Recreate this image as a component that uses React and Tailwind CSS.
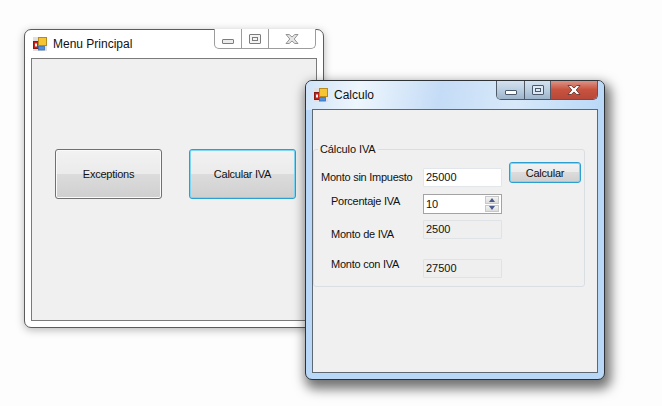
import React from "react";

const font = { fontFamily: '"Liberation Sans", Arial, sans-serif' };

function AppIcon() {
  return (
    <svg width="14" height="14" viewBox="0 0 14 14" className="shrink-0">
      <rect x="0" y="0" width="14" height="14" fill="#e0e0e0" />
      <rect x="0.5" y="4.5" width="5" height="7" fill="#c8201a" stroke="#8c1a14" />
      <rect x="2" y="6.5" width="2" height="3" fill="#f3f3f3" />
      <rect x="5.5" y="0.5" width="8" height="8" fill="#f5c533" stroke="#b88a1c" />
      <rect x="5.5" y="9.5" width="6" height="3.5" fill="#4f8fe0" stroke="#3a6db0" strokeWidth="0.8" />
    </svg>
  );
}

function MinGlyph({ glass }) {
  return (
    <div className={`w-[12px] h-[5px] rounded-[1px] border ${glass ? "border-[#4a5a6c] bg-white" : "border-[#7c7c7c] bg-[#ececec]"}`} />
  );
}

function MaxGlyph({ glass }) {
  return (
    <div className={`w-[12px] h-[10px] border rounded-[1px] flex items-center justify-center ${glass ? "border-[#4a5a6c] bg-[#dfe9f3]" : "border-[#7c7c7c] bg-[#f4f4f4]"}`}>
      <div className={`w-[6px] h-[4px] border ${glass ? "border-[#4a5a6c]" : "border-[#7c7c7c]"}`} />
    </div>
  );
}

function CloseGlyph({ glass }) {
  return (
    <svg width="14" height="10" viewBox="0 0 14 10">
      <path
        d="M1 0.5h3.2L7 3l2.8-2.5H13L9.2 5 13 9.5H9.8L7 7 4.2 9.5H1L4.8 5z"
        fill={glass ? "#ffffff" : "#e6e6e6"}
        stroke={glass ? "#5a2a24" : "#7c7c7c"}
        strokeWidth="0.8"
      />
    </svg>
  );
}

function CaptionButtons({ glass }) {
  if (glass) {
    return (
      <div className="ml-auto self-start flex h-[20px] w-[102px] -mt-px border border-t-0 border-[#4f5a66] rounded-b-[5px] overflow-hidden">
        <div className="w-[28px] flex items-center justify-center border-r border-[#4f5a66] bg-gradient-to-b from-[#d6e3f0] via-[#bccfe2] to-[#9db4ca]">
          <div className="mt-[5px]"><MinGlyph glass /></div>
        </div>
        <div className="w-[26px] flex items-center justify-center border-r border-[#4f5a66] bg-gradient-to-b from-[#d6e3f0] via-[#bccfe2] to-[#9db4ca]">
          <MaxGlyph glass />
        </div>
        <div className="flex-1 flex items-center justify-center bg-gradient-to-b from-[#dc9a8e] via-[#c8533f] to-[#b8483a]">
          <CloseGlyph glass />
        </div>
      </div>
    );
  }
  return (
    <div className="ml-auto mr-px self-start flex h-[20px] w-[102px] -mt-px border border-t-0 border-[#9c9c9c] rounded-b-[5px] bg-white">
      <div className="w-[27px] flex items-center justify-center border-r border-[#9c9c9c]">
        <div className="mt-[5px]"><MinGlyph /></div>
      </div>
      <div className="w-[27px] flex items-center justify-center border-r border-[#9c9c9c]">
        <MaxGlyph />
      </div>
      <div className="flex-1 flex items-center justify-center">
        <CloseGlyph />
      </div>
    </div>
  );
}

function WinButton({ children, focused, className = "", textClass = "" }) {
  return (
    <button
      className={`relative overflow-hidden rounded-[3px] border text-[11px] tracking-[-0.25px] text-[#111] flex items-center justify-center shrink-0 bg-[linear-gradient(to_bottom,#f2f2f2_0%,#ebebeb_49%,#dcdcdc_50%,#cfcfcf_100%)] ${
        focused ? "border-[#2a9fd0] shadow-[inset_0_0_0_1px_#7fd6f2]" : "border-[#707070] shadow-[inset_0_0_0_1px_#fafafa]"
      } ${className}`}
    >
      <span className={textClass}>{children}</span>
    </button>
  );
}

function TextValue({ children, disabled, className = "", textClass = "" }) {
  return (
    <div
      className={`w-[79px] h-[19px] border rounded-[1px] flex items-center pl-[2px] text-[11px] text-[#111] ${
        disabled ? "bg-[#efefef] border-[#dfe3e6]" : "bg-white border-[#e2e6ea]"
      } ${className}`}
    >
      <span className={textClass}>{children}</span>
    </div>
  );
}

function Spinner() {
  return (
    <div className="w-[79px] h-[20px] border border-[#a3a3a3] bg-white flex items-center justify-between pl-[2px] pr-[2px] text-[11px] text-[#111]">
      <span className="mt-[1px]">10</span>
      <div className="flex flex-col gap-px w-[14px] h-[16px]">
        <div className="flex-1 bg-gradient-to-b from-[#f4f4f4] to-[#dcdcdc] border border-[#c8c8c8] flex items-center justify-center">
          <div className="w-0 h-0 border-x-[3px] border-x-transparent border-b-[4px] border-b-[#4a5a8c]" />
        </div>
        <div className="flex-1 bg-gradient-to-b from-[#f4f4f4] to-[#dcdcdc] border border-[#c8c8c8] flex items-center justify-center">
          <div className="w-0 h-0 border-x-[3px] border-x-transparent border-t-[4px] border-t-[#4a5a8c]" />
        </div>
      </div>
    </div>
  );
}

function Row({ label, labelClass, className = "", children }) {
  return (
    <div className={`flex items-start ${className}`}>
      <div className={`w-[102px] shrink-0 text-[11px] tracking-[-0.25px] leading-[14px] text-[#111] whitespace-nowrap ${labelClass}`}>{label}</div>
      {children}
    </div>
  );
}

function MenuWindow() {
  return (
    <div className="absolute left-[24px] top-[29px] w-[300px] h-[299px] bg-white border border-[#5c5c5c] rounded-[7px] px-[6px] flex flex-col shadow-[0_2px_8px_rgba(0,0,0,0.28)]">
      <div className="h-[28px] flex items-center shrink-0">
        <div className="ml-[2px]"><AppIcon /></div>
        <span className="ml-[6px] text-[12px] text-[#111]">Menu Principal</span>
        <CaptionButtons />
      </div>
      <div className="h-[263px] border border-[#7a7a7a] bg-[#f0f0f0] flex items-start pl-[23px] pt-[90px] gap-[27px]">
        <WinButton className="w-[107px] h-[50px]">Exceptions</WinButton>
        <WinButton focused className="w-[107px] h-[50px]">Calcular IVA</WinButton>
      </div>
    </div>
  );
}

function CalculoWindow() {
  return (
    <div className="absolute left-[305px] top-[80px] w-[300px] h-[300px] border border-[#2e3338] rounded-[7px] px-[6px] flex flex-col bg-[#b9d8f7] shadow-[3px_6px_12px_3px_rgba(0,0,0,0.55)] overflow-hidden">
      <div className="absolute inset-x-0 top-0 h-[29px] bg-[linear-gradient(100deg,#cfe3f8_0%,#eef6fd_18%,#c4dcf6_45%,#d8e9fa_70%,#b9d8f7_100%)]" />
      <div className="relative h-[28px] flex items-center shrink-0">
        <div className="ml-[2px]"><AppIcon /></div>
        <span className="ml-[6px] text-[12px] text-[#111]">Calculo</span>
        <CaptionButtons glass />
      </div>
      <div className="relative h-[264px] border border-[#5d6873] bg-[#f0f0f0]">
        <div className="relative mt-[39px] w-[272px] h-[138px] border border-[#d9dee3] rounded-[3px] pt-[18px] pl-[7px]">
          <span className="absolute left-[4px] -top-[8px] bg-[#f0f0f0] px-[2px] text-[11px] tracking-[-0.1px] leading-[14px] text-[#111]">Cálculo IVA</span>
          <Row label="Monto sin Impuesto" labelClass="mt-[2px]">
            <TextValue>25000</TextValue>
            <WinButton focused className="w-[72px] h-[21px] ml-[7px] -mt-[6px]" textClass="mt-px">Calcular</WinButton>
          </Row>
          <Row label="Porcentaje IVA" labelClass="pl-[10px]" className="mt-[7px]">
            <Spinner />
          </Row>
          <Row label="Monto de IVA" labelClass="pl-[10px] mt-[7px]" className="mt-[6px]">
            <TextValue disabled textClass="-mt-[1px]">2500</TextValue>
          </Row>
          <Row label="Monto con IVA" labelClass="pl-[10px] -mt-[2px]" className="mt-[18px]">
            <TextValue disabled>27500</TextValue>
          </Row>
        </div>
      </div>
    </div>
  );
}

export default function App() {
  return (
    <div className="relative w-[662px] h-[406px] overflow-hidden bg-[#fdfdfd]" style={font}>
      <MenuWindow />
      <CalculoWindow />
    </div>
  );
}
